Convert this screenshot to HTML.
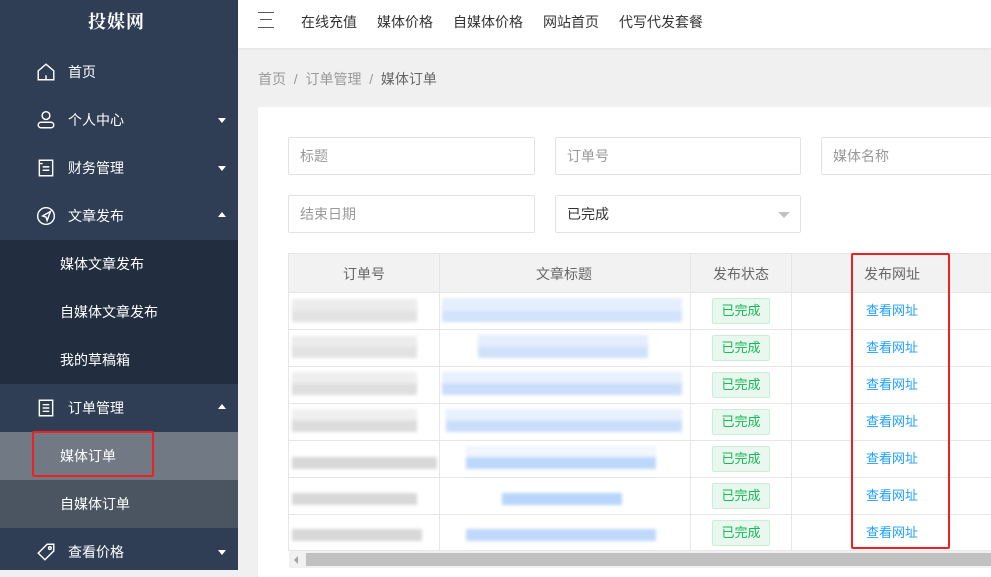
<!DOCTYPE html>
<html><head><meta charset="utf-8"><style>
*{margin:0;padding:0;box-sizing:border-box}
body{width:991px;height:570px;overflow:hidden;position:relative;background:#f0f0f0;font-family:"Liberation Sans","Noto Sans CJK SC",sans-serif;font-size:14px;color:#333}
.a{position:absolute}
#side{left:0;top:0;width:238px;height:570px;background:#2f3e55}
.mi{position:absolute;left:0;width:238px;height:48px;color:#fff;font-size:14px;line-height:48px}
.mi .t{position:absolute;left:68px}
.mi svg{position:absolute;left:36px;top:14px}
.car{position:absolute;right:12px;top:22px;width:0;height:0;border-left:4px solid transparent;border-right:4px solid transparent}
.dn{border-top:5px solid #fff}
.up{border-bottom:5px solid #fff;top:20px}
.sub .t{left:60px}
#top{left:238px;top:0;width:753px;height:48px;background:#fff;box-shadow:0 1px 3px rgba(0,0,0,.06)}
#top span{position:absolute;top:12px;font-size:14px;color:#333}
.inp{position:absolute;height:38px;border:1px solid #e2e2e2;border-radius:2px;background:#fff;color:#999;padding-left:11px;line-height:36px}
.tag{position:absolute;left:712px;width:58px;height:26px;border:1px solid #c9f0d7;background:#e8f8ee;color:#16b955;border-radius:2px;font-size:13px;text-align:center;line-height:24px}
.lk{position:absolute;left:866px;color:#1e9fff;font-size:13px}
.bg{position:absolute;height:12px;filter:blur(1.5px)}
</style></head><body>
<div id="side" class="a">
 <div class="a" style="left:88px;top:8px;color:#fff;font-size:18px;font-weight:bold;font-family:'Noto Serif CJK SC',serif;letter-spacing:1px">投媒网</div>
 <div class="mi" style="top:48px"><svg width="20" height="20" viewBox="0 0 18 18" fill="none" stroke="#fff" stroke-width="1.3"><path d="M2 8L9 2l7 6v8H2z"/><path d="M9 12v4"/></svg><span class="t">首页</span></div>
 <div class="mi" style="top:96px"><svg width="20" height="20" viewBox="0 0 18 18" fill="none" stroke="#fff" stroke-width="1.3"><circle cx="9" cy="5" r="3.5"/><rect x="2" y="11" width="14" height="5" rx="2.5"/></svg><span class="t">个人中心</span><i class="car dn"></i></div>
 <div class="mi" style="top:144px"><svg width="20" height="20" viewBox="0 0 18 18" fill="none" stroke="#fff" stroke-width="1.3"><path d="M3 2h12v14H3z"/><path d="M6 8h6M6 11h6M3 5h3"/></svg><span class="t">财务管理</span><i class="car dn"></i></div>
 <div class="mi" style="top:192px"><svg width="20" height="20" viewBox="0 0 18 18" fill="none" stroke="#fff" stroke-width="1.3"><circle cx="9" cy="9" r="7.5"/><path d="M13 5L6 9l3 1 1 3z"/></svg><span class="t">文章发布</span><i class="car up"></i></div>
 <div class="a" style="left:0;top:240px;width:238px;height:144px;background:#222d3f"></div>
 <div class="mi sub" style="top:240px"><span class="t">媒体文章发布</span></div>
 <div class="mi sub" style="top:288px"><span class="t">自媒体文章发布</span></div>
 <div class="mi sub" style="top:336px"><span class="t">我的草稿箱</span></div>
 <div class="mi" style="top:384px"><svg width="20" height="20" viewBox="0 0 18 18" fill="none" stroke="#fff" stroke-width="1.3"><path d="M3 2h12v14H3z"/><path d="M6 6h6M6 9h6M6 12h6"/></svg><span class="t">订单管理</span><i class="car up"></i></div>
 <div class="mi sub" style="top:432px;background:#717a84"><span class="t">媒体订单</span></div>
 <div class="a" style="left:32px;top:431px;width:122px;height:46px;border:2px solid #f51e1e;border-radius:2px"></div>
 <div class="mi sub" style="top:480px;background:#4b5562"><span class="t">自媒体订单</span></div>
 <div class="mi" style="top:528px"><svg width="20" height="20" viewBox="0 0 18 18" fill="none" stroke="#fff" stroke-width="1.3"><path d="M2 10l8-8h6v6l-8 8z"/><circle cx="12.5" cy="5.5" r="1.2"/></svg><span class="t">查看价格</span><i class="car dn"></i></div>
</div>
<div id="top" class="a">
 <div class="a" style="left:20px;top:12px;width:16px;height:1px;background:#555"></div>
 <div class="a" style="left:22px;top:19px;width:12px;height:1px;background:#555"></div>
 <div class="a" style="left:20px;top:27px;width:16px;height:1px;background:#555"></div>
 <span style="left:63px">在线充值</span><span style="left:139px">媒体价格</span><span style="left:215px">自媒体价格</span><span style="left:305px">网站首页</span><span style="left:381px">代写代发套餐</span>
</div>
<div class="a" style="left:258px;top:69px;color:#999;font-size:14px">首页 &nbsp;/ &nbsp;订单管理 &nbsp;/ &nbsp;<span style="color:#666">媒体订单</span></div>
<div class="a" style="left:258px;top:107px;width:740px;height:470px;background:#fff;border-radius:2px"></div>
<div class="inp" style="left:288px;top:137px;width:247px">标题</div>
<div class="inp" style="left:555px;top:137px;width:246px">订单号</div>
<div class="inp" style="left:821px;top:137px;width:180px">媒体名称</div>
<div class="inp" style="left:288px;top:195px;width:247px">结束日期</div>
<div class="inp" style="left:555px;top:195px;width:246px;color:#333">已完成<i style="position:absolute;right:10px;top:16px;border-left:6px solid transparent;border-right:6px solid transparent;border-top:6px solid #c2c2c2"></i></div>
<div class="a" style="left:288px;top:253px;width:710px;height:39px;background:#f2f2f2;border-top:1px solid #e6e6e6;border-left:1px solid #e6e6e6"></div>
<div class="a" style="left:288px;top:253px;width:1px;height:298px;background:#e6e6e6"></div>
<div class="a" style="left:439px;top:253px;width:1px;height:298px;background:#e6e6e6"></div>
<div class="a" style="left:690px;top:253px;width:1px;height:298px;background:#e6e6e6"></div>
<div class="a" style="left:791px;top:253px;width:1px;height:298px;background:#e6e6e6"></div>
<div class="a" style="left:343px;top:264px;color:#666">订单号</div>
<div class="a" style="left:536px;top:264px;color:#666">文章标题</div>
<div class="a" style="left:713px;top:264px;color:#666">发布状态</div>
<div class="a" style="left:864px;top:264px;color:#666">发布网址</div>
<div class="a" style="left:288px;top:292px;width:710px;height:1px;background:#e6e6e6"></div>
<div class="a" style="left:288px;top:329px;width:710px;height:1px;background:#e6e6e6"></div>
<div class="a" style="left:288px;top:366px;width:710px;height:1px;background:#e6e6e6"></div>
<div class="a" style="left:288px;top:403px;width:710px;height:1px;background:#e6e6e6"></div>
<div class="a" style="left:288px;top:440px;width:710px;height:1px;background:#e6e6e6"></div>
<div class="a" style="left:288px;top:477px;width:710px;height:1px;background:#e6e6e6"></div>
<div class="a" style="left:288px;top:514px;width:710px;height:1px;background:#e6e6e6"></div>
<div class="a" style="left:288px;top:550px;width:710px;height:1px;background:#e6e6e6"></div>
<div class="bg" style="left:292px;top:299px;width:125px;background:#ececec"></div><div class="bg" style="left:292px;top:310px;width:125px;background:#e2e2e2"></div>
<div class="bg" style="left:442px;top:298px;width:240px;background:#e4eefc"></div><div class="bg" style="left:442px;top:310px;width:240px;background:#d2e3fb"></div>
<div class="bg" style="left:292px;top:336px;width:125px;background:#ececec"></div><div class="bg" style="left:292px;top:346px;width:125px;background:#e2e2e2"></div>
<div class="bg" style="left:478px;top:335px;width:170px;background:#e4eefc"></div><div class="bg" style="left:478px;top:346px;width:170px;background:#d0e2fb"></div>
<div class="bg" style="left:292px;top:372px;width:125px;background:#efefef"></div><div class="bg" style="left:292px;top:383px;width:125px;background:#dedede"></div>
<div class="bg" style="left:442px;top:372px;width:240px;background:#e8f0fc"></div><div class="bg" style="left:442px;top:383px;width:240px;background:#cadefb"></div>
<div class="bg" style="left:292px;top:409px;width:125px;background:#f0f0f0"></div><div class="bg" style="left:292px;top:420px;width:125px;background:#dcdcdc"></div>
<div class="bg" style="left:446px;top:409px;width:236px;background:#e8f0fc"></div><div class="bg" style="left:446px;top:420px;width:236px;background:#cadefb"></div>
<div class="bg" style="left:292px;top:457px;width:145px;background:#d8d8d8"></div>
<div class="bg" style="left:466px;top:446px;width:190px;background:#f2f6fd"></div><div class="bg" style="left:466px;top:457px;width:190px;background:#bdd7fb"></div>
<div class="bg" style="left:292px;top:493px;width:125px;background:#d8d8d8"></div>
<div class="bg" style="left:502px;top:493px;width:120px;background:#b8d5fc"></div>
<div class="bg" style="left:292px;top:529px;width:130px;background:#d8d8d8"></div>
<div class="bg" style="left:466px;top:529px;width:190px;background:#bfd8fb"></div>
<div class="tag" style="top:298px">已完成</div><div class="tag" style="top:335px">已完成</div><div class="tag" style="top:372px">已完成</div><div class="tag" style="top:409px">已完成</div><div class="tag" style="top:446px">已完成</div><div class="tag" style="top:483px">已完成</div><div class="tag" style="top:520px">已完成</div>
<div class="lk" style="top:300px">查看网址</div><div class="lk" style="top:337px">查看网址</div><div class="lk" style="top:374px">查看网址</div><div class="lk" style="top:411px">查看网址</div><div class="lk" style="top:448px">查看网址</div><div class="lk" style="top:485px">查看网址</div><div class="lk" style="top:522px">查看网址</div>
<div class="a" style="left:851px;top:253px;width:99px;height:296px;border:2px solid #f51e1e;border-radius:2px"></div>
<div class="a" style="left:289px;top:551px;width:710px;height:17px;background:#f1f1f1"></div>
<div class="a" style="left:306px;top:553px;width:690px;height:13px;background:#c1c1c1"></div>
<div class="a" style="left:294px;top:556px;border-top:4px solid transparent;border-bottom:4px solid transparent;border-right:4px solid #a3a3a3"></div>
</body></html>
